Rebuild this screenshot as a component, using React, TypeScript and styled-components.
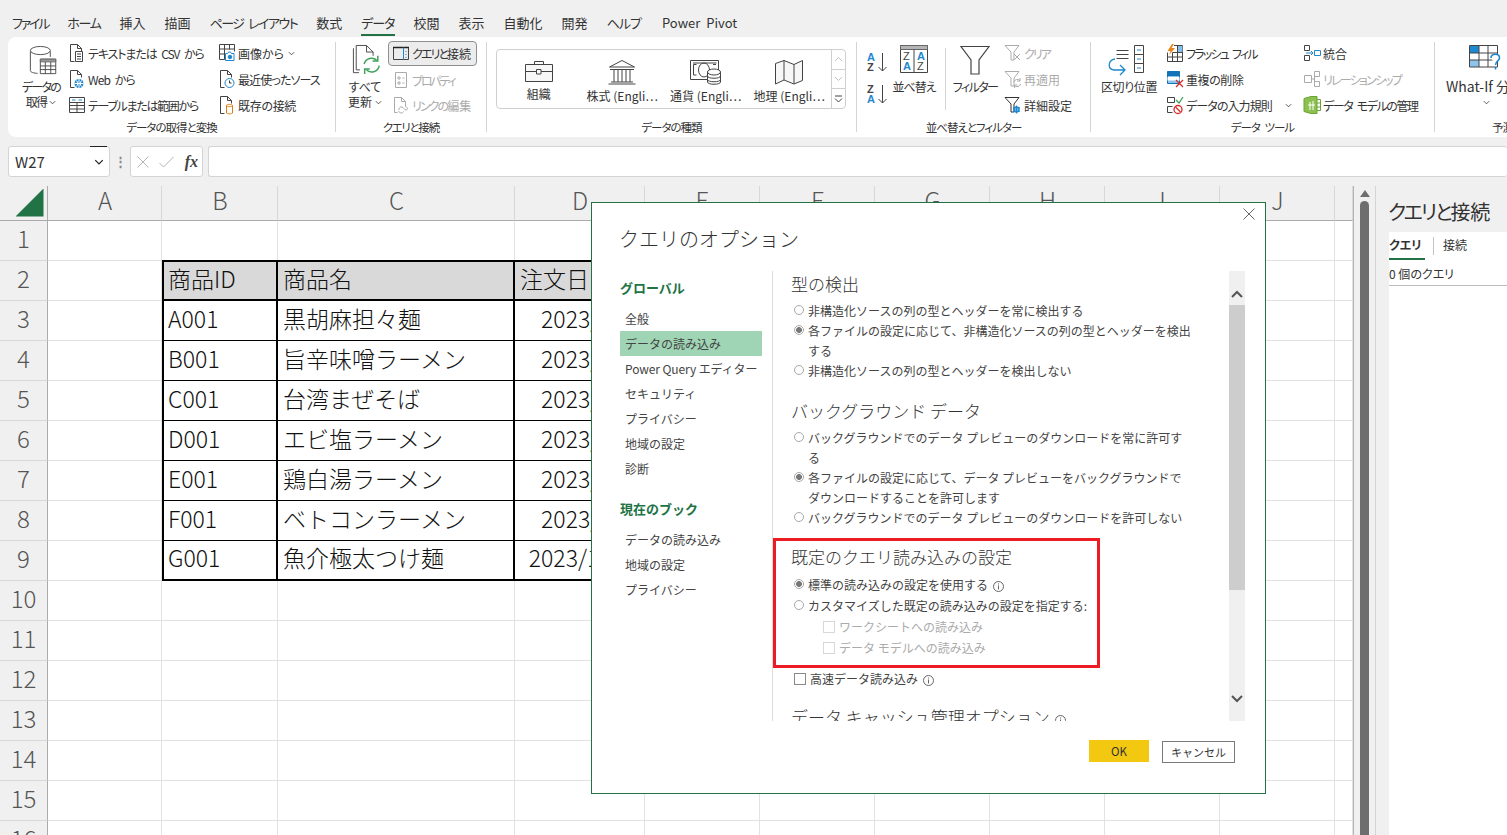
import React from "react";
import styled, { createGlobalStyle } from "styled-components";

const FONT = `"Noto Sans CJK JP", "Noto Sans", sans-serif`;
const GREEN = "#217346";
const BLUE = "#1e88d0";
const MUTED = "#ababab";

const GlobalStyle = createGlobalStyle`
  html, body {
    margin: 0;
    padding: 0;
    background: #f0f0f0;
    overflow: hidden;
  }
  body {
    font-family: ${FONT};
    font-feature-settings: "palt";
    color: #333;
  }
`;

const Page = styled.div`
  position: relative;
  width: 1507px;
  height: 835px;
  overflow: hidden;
  background: #f0f0f0;
  display: flex;
  flex-direction: column;
`;

/* ---- tabs ---- */

const TabBar = styled.div`
  height: 37px;
  flex: none;
  display: flex;
  gap: 19px;
  padding: 13px 0 0 12px;
  box-sizing: border-box;
`;

const Tab = styled.div<{ $active?: boolean; $track?: number; $gap?: number }>`
  height: 21px;
  line-height: 20px;
  font-size: 13px;
  white-space: nowrap;
  color: #333;
  letter-spacing: ${(p) => p.$track ?? 0}px;
  word-spacing: 3px;
  margin-left: ${(p) => p.$gap ?? 0}px;
  border-bottom: 2px solid ${(p) => (p.$active ? GREEN : "transparent")};
`;

/* narrow kana run next to full width kanji */
const Kana = styled.span<{ $track: number }>`
  letter-spacing: ${(p) => p.$track}px;
`;

/* ---- ribbon ---- */

const Ribbon = styled.div`
  flex: none;
  height: 100px;
  margin-left: 8px;
  background: #fff;
  border-radius: 8px 0 0 8px;
  display: flex;
  overflow: hidden;
`;

const Group = styled.section<{ $w: number; $last?: boolean }>`
  flex: none;
  width: ${(p) => p.$w}px;
  height: 90px;
  margin-top: 5px;
  box-sizing: border-box;
  border-right: ${(p) => (p.$last ? "none" : "1px solid #d4d4d4")};
  display: flex;
  flex-direction: column;
`;

const GroupBody = styled.div<{ $pad: number }>`
  flex: none;
  height: 76px;
  display: flex;
  padding-left: ${(p) => p.$pad}px;
  box-sizing: border-box;
`;

const GroupLabel = styled.div<{ $shift?: number }>`
  height: 14px;
  flex: none;
  text-align: center;
  font-size: 11.5px;
  line-height: 18px;
  letter-spacing: -1px;
  word-spacing: 3px;
  color: #333;
  white-space: nowrap;
  padding-left: ${(p) => p.$shift ?? 0}px;
`;

const BigButton = styled.div<{ $w: number; $indent?: number }>`
  flex: none;
  width: ${(p) => p.$w}px;
  margin-left: ${(p) => p.$indent ?? 0}px;
  display: flex;
  flex-direction: column;
  align-items: center;
  padding-top: 3px;
  font-size: 12px;
  line-height: 15px;
  text-align: center;
  white-space: nowrap;
`;

const BigIcon = styled.div<{ $shift?: number }>`
  height: 34px;
  display: flex;
  align-items: flex-start;
  margin-left: ${(p) => p.$shift ?? 0}px;
`;

const BigLabel = styled.div<{ $track?: number; $size?: number }>`
  letter-spacing: ${(p) => p.$track ?? 0}px;
  font-size: ${(p) => p.$size ?? 12}px;

  svg {
    display: inline-block;
    vertical-align: 1px;
    margin-left: 3px;
  }
`;

const SmallColumn = styled.div<{ $w: number; $indent?: number }>`
  flex: none;
  width: ${(p) => p.$w}px;
  margin-top: -2px;
  margin-left: ${(p) => p.$indent ?? 0}px;
  display: flex;
  flex-direction: column;
`;

const SmallButton = styled.div<{ $muted?: boolean; $active?: boolean; $track?: number }>`
  height: 26px;
  display: flex;
  align-items: center;
  gap: 2px;
  font-size: 12px;
  white-space: pre;
  letter-spacing: ${(p) => p.$track ?? 0}px;
  word-spacing: 3px;
  color: ${(p) => (p.$muted ? MUTED : "#333")};
  ${(p) =>
    p.$active &&
    `
    height: 24px;
    margin: 1px 0 1px -4px;
    padding-left: 3px;
    background: #ececec;
    border: 1px solid #8f8f8f;
    border-radius: 4px;
  `}
`;

const SmallChevron = styled.span<{ $gap: number }>`
  margin-left: ${(p) => p.$gap}px;
`;

const SortColumn = styled.div`
  flex: none;
  width: 24px;
  padding-top: 9px;
  display: flex;
  flex-direction: column;
  gap: 8px;
`;

const Rule = styled.div`
  flex: none;
  width: 1px;
  height: 62px;
  margin: 6px 7px 0 8px;
  background: #d4d4d4;
`;

const Gallery = styled.div`
  flex: none;
  width: 350px;
  height: 60px;
  margin-top: 7px;
  box-sizing: border-box;
  border: 1px solid #cfcfcf;
  border-radius: 4px;
  display: flex;
`;

const GalleryItem = styled.div`
  flex: none;
  width: 83.5px;
  display: flex;
  flex-direction: column;
  align-items: center;
  padding-top: 9px;
  font-size: 12px;
  white-space: nowrap;
  color: #333;
`;

const GalleryText = styled.div`
  margin-top: 3px;
  line-height: 16px;
`;

const GalleryScroll = styled.div`
  margin-left: auto;
  width: 14px;
  display: flex;
  flex-direction: column;
  border-left: 1px solid #cfcfcf;
`;

const GalleryStep = styled.div`
  flex: 1;
  display: flex;
  align-items: center;
  justify-content: center;
  & + & {
    border-top: 1px solid #cfcfcf;
  }
`;

/* ---- formula bar ---- */

const FormulaBar = styled.div`
  flex: none;
  height: 31px;
  margin-top: 9px;
  padding-left: 8px;
  display: flex;
  align-items: stretch;
`;

const Field = styled.div`
  box-sizing: border-box;
  background: #fff;
  border: 1px solid #d4d4d4;
  border-radius: 3px;
  display: flex;
  align-items: center;
`;

const NameBox = styled(Field)`
  width: 102px;
  padding: 0 2px 0 6px;
  justify-content: space-between;
  font-size: 15px;
  color: #333;
`;

const NameArrow = styled.div`
  align-self: stretch;
  width: 17px;
  box-sizing: border-box;
  margin-top: -1px;
  border-top: 1px solid #222;
  display: flex;
  align-items: center;
  justify-content: center;
`;

const Dots = styled.div`
  width: 20px;
  text-align: center;
  line-height: 29px;
  font-size: 13px;
  font-weight: 700;
  color: #888;
`;

const FormulaTools = styled(Field)`
  width: 73px;
  padding: 0 4px 0 6px;
  justify-content: space-between;
`;

const Fx = styled.span`
  font-family: "Liberation Serif", serif;
  font-style: italic;
  font-weight: 700;
  font-size: 16px;
  color: #444;
`;

const FormulaInput = styled(Field)`
  flex: 1;
  margin-left: 5px;
  border-right: none;
`;

/* ---- sheet ---- */

const Main = styled.div`
  flex: 1;
  margin-top: 9px;
  display: flex;
  min-height: 0;
`;

const Sheet = styled.div`
  flex: none;
  width: 1353px;
  height: 649px;
  overflow: hidden;
  display: grid;
  grid-template-columns: 48px 114px 116px 237px 130px repeat(6, 115px) 18px;
  grid-auto-rows: 40px;
  grid-template-rows: 35px;
  background: #fff;
  font-size: 24px;
  line-height: 1;
  font-feature-settings: normal;
`;

const HeadCell = styled.div<{ $row?: boolean }>`
  box-sizing: border-box;
  background: #f0f0f0;
  color: #555;
  font-weight: 300;
  display: flex;
  align-items: center;
  justify-content: center;
  padding: ${(p) => (p.$row ? "0 0 5px" : "0 0 6px 1px")};
  border-right: 1px solid ${(p) => (p.$row ? "#ababab" : "#d8d8d8")};
  border-bottom: 1px solid ${(p) => (p.$row ? "#d8d8d8" : "#ababab")};
`;

const Corner = styled(HeadCell)`
  padding: 0 0 1px;
  border-right: 1px solid #ababab;
`;

const CornerMark = styled.div`
  width: 28px;
  height: 28px;
  margin-left: 12px;
  background: ${GREEN};
  clip-path: polygon(100% 0, 100% 100%, 0 100%);
`;

const Cell = styled.div`
  box-sizing: border-box;
  border-right: 1px solid #e2e2e2;
  border-bottom: 1px solid #e2e2e2;
`;

const TableCell = styled.div<{ $head?: boolean; $lead?: boolean; $end?: boolean; $date?: boolean }>`
  box-sizing: border-box;
  display: flex;
  align-items: center;
  justify-content: ${(p) => (p.$date ? "flex-end" : "flex-start")};
  white-space: nowrap;
  overflow: hidden;
  margin-top: ${(p) => (p.$head ? -1 : 0)}px;
  padding: 0 ${(p) => (p.$date ? 10 : 4)}px 5px ${(p) => (p.$lead ? 4 : 5)}px;
  font-size: 23px;
  color: #111;
  font-weight: 300;
  background: ${(p) => (p.$head ? "#d9d9d9" : "#fff")};
  border-right: 2px solid #000;
  border-left: ${(p) => (p.$lead ? "2px solid #000" : "none")};
  border-top: ${(p) => (p.$head ? "2px solid #000" : "none")};
  border-bottom: ${(p) => (p.$head || p.$end ? 2 : 1)}px solid #000;
`;

const ScrollRail = styled.div`
  flex: none;
  width: 23px;
  box-sizing: border-box;
  border-left: 1px solid #b4b4b4;
  border-right: 1px solid #d4d4d4;
  display: flex;
  flex-direction: column;
  align-items: center;
  padding-top: 2px;
`;

const RailArrow = styled.div`
  width: 0;
  height: 0;
  border-left: 5px solid transparent;
  border-right: 5px solid transparent;
  border-bottom: 7px solid #6e6e6e;
  margin-top: 2px;
`;

const RailThumb = styled.div`
  flex: 1;
  width: 9px;
  margin-top: 4px;
  background: #6e6e6e;
  border-radius: 5px 5px 0 0;
`;

/* ---- side panel ---- */

const Panel = styled.aside`
  flex: 1;
  padding-left: 13px;
  display: flex;
  flex-direction: column;
`;

const PanelTitle = styled.h2`
  margin: 0 0 0 -1px;
  height: 46px;
  line-height: 52px;
  font-size: 20px;
  font-weight: 400;
  white-space: nowrap;
  color: #333;
`;

const PanelBody = styled.div`
  flex: 1;
  background: #fff;
`;

const PanelTabs = styled.div`
  height: 28px;
  display: flex;
  align-items: center;
  font-size: 12px;
`;

const PanelTab = styled.div<{ $active?: boolean }>`
  height: 28px;
  min-width: ${(p) => (p.$active ? 36 : 0)}px;
  line-height: 26px;
  box-sizing: border-box;
  font-weight: ${(p) => (p.$active ? 700 : 400)};
  border-bottom: 2px solid ${(p) => (p.$active ? GREEN : "transparent")};
`;

const PanelDivider = styled.div`
  width: 1px;
  height: 18px;
  margin: 0 9px 0 8px;
  background: #c4c4c4;
`;

const PanelCount = styled.div`
  height: 26px;
  line-height: 28px;
  font-size: 12px;
  box-sizing: border-box;
  border-bottom: 1px solid #bdbdbd;
  white-space: nowrap;
`;

/* ---- dialog ---- */

const Dialog = styled.div`
  position: absolute;
  left: 591px;
  top: 202px;
  width: 675px;
  height: 592px;
  box-sizing: border-box;
  background: #fff;
  border: 1px solid ${GREEN};
  display: flex;
  flex-direction: column;
  font-feature-settings: normal;
`;

const DialogHead = styled.div`
  height: 68px;
  flex: none;
  padding: 0 10px 0 28px;
  display: flex;
  justify-content: space-between;
  align-items: flex-start;
`;

const DialogTitle = styled.h1`
  margin: 20px 0 0 -1px;
  font-size: 20px;
  line-height: 32px;
  font-weight: 300;
  color: #333;
`;

const CloseButton = styled.div`
  margin-top: 5px;
`;

const DialogBody = styled.div`
  height: 450px;
  flex: none;
  margin-left: 28px;
  display: flex;
`;

const Nav = styled.nav`
  flex: none;
  width: 153px;
  box-sizing: border-box;
  padding-right: 10px;
  border-right: 1px solid #dcdcdc;
`;

const NavHeading = styled.div<{ $gap?: number }>`
  height: 20px;
  margin: ${(p) => p.$gap ?? 7}px 0 8px;
  line-height: 20px;
  font-size: 13px;
  font-weight: 700;
  color: ${GREEN};
`;

const NavItem = styled.div<{ $active?: boolean; $track?: number }>`
  height: 25px;
  line-height: 25px;
  padding-left: 5px;
  font-size: 12px;
  white-space: nowrap;
  color: #444;
  letter-spacing: ${(p) => p.$track ?? 0}px;
  background: ${(p) => (p.$active ? "#9fd5b5" : "transparent")};
`;

const Content = styled.div`
  flex: none;
  width: 456px;
  box-sizing: border-box;
  padding-left: 19px;
  overflow: hidden;
`;

const Heading = styled.h3<{ $gap?: number }>`
  margin: ${(p) => p.$gap ?? 0}px 0 4px -1px;
  height: 26px;
  line-height: 25px;
  font-size: 17px;
  font-weight: 300;
  white-space: nowrap;
  color: #333;
`;

const Option = styled.label<{ $h?: number; $indent?: boolean; $muted?: boolean }>`
  display: flex;
  align-items: flex-start;
  gap: 4px;
  font-size: 12px;
  line-height: ${(p) => p.$h ?? 20}px;
  white-space: nowrap;
  color: ${(p) => (p.$muted ? MUTED : "#444")};
  padding-left: ${(p) => (p.$indent ? 31 : 2)}px;
`;

const Radio = styled.span<{ $on?: boolean; $h?: number }>`
  flex: none;
  width: 10px;
  height: 10px;
  margin-top: ${(p) => ((p.$h ?? 20) - 10) / 2 - 1}px;
  box-sizing: border-box;
  border: 1px solid #a8a8a8;
  border-radius: 50%;
  background: ${(p) => (p.$on ? "radial-gradient(circle, #777 0 2.6px, #fff 3.2px)" : "#fff")};
`;

const Check = styled.span<{ $h?: number; $muted?: boolean }>`
  flex: none;
  width: 12px;
  height: 12px;
  margin-top: ${(p) => ((p.$h ?? 20) - 12) / 2}px;
  box-sizing: border-box;
  border: 1px solid ${(p) => (p.$muted ? "#d8d8d8" : "#8a8a8a")};
`;

const OptionInfo = styled.span`
  display: inline-flex;
  vertical-align: -2px;
  margin-left: 5px;
`;

const Callout = styled.div`
  width: 327px;
  height: 130px;
  margin: 10px 0 1px -19px;
  padding: 3px 0 0 16px;
  box-sizing: border-box;
  border: 3px solid #ed1c24;
`;

const DialogScroll = styled.div`
  flex: none;
  width: 16px;
  background: #f0f0f0;
  display: flex;
  flex-direction: column;
  align-items: center;
`;

const ScrollCap = styled.div<{ $h: number; $end?: boolean }>`
  flex: none;
  height: ${(p) => p.$h}px;
  display: flex;
  align-items: ${(p) => (p.$end ? "flex-start" : "flex-end")};
  padding: ${(p) => (p.$end ? "0" : "0 0 7px")};
  box-sizing: border-box;
`;

const ScrollThumb = styled.div`
  flex: none;
  width: 100%;
  height: 285px;
  background: #cdcdcd;
`;

const ScrollSpace = styled.div`
  flex: 1;
`;

const DialogFoot = styled.div`
  display: flex;
  justify-content: flex-end;
  align-items: flex-start;
  gap: 13px;
  padding: 19px 30px 0 0;
`;

const OkButton = styled.div`
  width: 60px;
  height: 22px;
  line-height: 22px;
  text-align: center;
  font-size: 11.5px;
  background: #f2c811;
  color: #333;
`;

const CancelButton = styled.div`
  width: 73px;
  height: 22px;
  margin-top: 1px;
  line-height: 20px;
  box-sizing: border-box;
  text-align: center;
  font-size: 11px;
  border: 1px solid #7a7a7a;
  color: #333;
`;

/* ---- icons ---- */

const Svg = styled.svg<{ $tone?: string }>`
  flex: none;
  display: block;
  fill: none;
  stroke: ${(p) => p.$tone ?? "#444"};
  stroke-width: 1;
  overflow: visible;
`;

const Letter = styled.text<{ $fill: string; $thin?: boolean }>`
  font-family: "Liberation Sans", sans-serif;
  font-weight: ${(p) => (p.$thin ? 400 : 700)};
  font-size: 11px;
  letter-spacing: 0;
  stroke: none;
  fill: ${(p) => p.$fill};
`;

const Page18 = ({ tone }: { tone?: string }) => (
  <path stroke={tone} d="M2.500 18.500V1.500h7l4 4v3M9.500 1.500v4h4M2.500 18.500h4" />
);

const IconText = () => (
  <Svg $tone="#444" width="18" height="20" viewBox="0 0 18 20">
    <Page18 />
    <path d="M7.500 8.500h7v10h-7zM9 11h4M9 13.500h4M9 16h4" />
  </Svg>
);

const IconWeb = () => (
  <Svg width="18" height="20" viewBox="0 0 18 20">
    <Page18 />
    <circle cx="11" cy="14.500" r="4.500" fill={BLUE} stroke="none" />
    <path stroke="#fff" d="M6.500 14.500h9M11 10v9M8.500 11.500c1.500 2 1.500 4.500 0 6M13.500 11.500c-1.500 2-1.500 4.500 0 6" />
  </Svg>
);

const IconRange = () => (
  <Svg width="18" height="20" viewBox="0 0 18 20">
    <path d="M1.500 2.500h15v15h-15zM1.500 7.500h15M1.500 10.500h15M1.500 14h15M9 7.500v10" />
    <path stroke={BLUE} d="M4 5h3.500M10.500 5H14" />
  </Svg>
);

const IconImage = () => (
  <Svg width="18" height="20" viewBox="0 0 18 20">
    <path d="M1.500 1.500h15v7M1.500 1.500v15h5M1.500 6h15M1.500 11h5M6.500 1.500v15M11.500 1.500v5" />
    <path stroke={BLUE} fill="#fff" d="M7.500 10.500h2l1-1.500h2l1 1.500h2.500v7h-8.500z" />
    <circle cx="12" cy="14" r="1.800" stroke={BLUE} fill={BLUE} />
  </Svg>
);

const IconRecent = () => (
  <Svg width="18" height="20" viewBox="0 0 18 20">
    <Page18 />
    <circle cx="11.500" cy="14" r="4.500" stroke={BLUE} fill="#fff" />
    <path stroke="#333" d="M11.500 11.500V14h2" />
  </Svg>
);

const IconConn = () => (
  <Svg width="18" height="20" viewBox="0 0 18 20">
    <Page18 />
    <path stroke="#e07b12" fill="#fff" d="M8.500 10.500c0-1.500 6-1.500 6 0v7.500c0 1-6 1-6 0zM8.500 10.500c0 1.500 6 1.500 6 0" />
  </Svg>
);

const IconData = () => (
  <Svg width="29" height="31" viewBox="0 0 32 34">
    <path d="M1.500 7v21c0 2 4 3 8 3.200M23.500 7v6" />
    <ellipse cx="12.500" cy="6" rx="11" ry="4.500" />
    <path fill="#fff" d="M12.500 15.500h17v16h-17z" />
    <path stroke="#666" fill="#999" d="M12.500 15.500h17v3h-17z" />
    <path d="M12.500 23h17M12.500 27h17M18 18.500v13M24 18.500v13" />
  </Svg>
);

const IconRefresh = () => (
  <Svg width="30" height="30" viewBox="0 0 32 32">
    <path d="M1.500 3.500v26h6M4.500 26.500V.5h11l7 7v4M15.500.5v7h7M4.500 26.500h4" />
    <path stroke="#3fa35b" strokeWidth="1.600" d="M13 20.500a8 8 0 0 1 13.500-4M29 22a8 8 0 0 1-14 4" />
    <path stroke="#3fa35b" strokeWidth="1.600" d="M27.500 11.500v5.500h-5.500M13.500 31v-5.500H19" />
  </Svg>
);

const IconPane = () => (
  <Svg width="18" height="16" viewBox="0 0 18 16">
    <path d="M1.500 1.500h15v12h-15z" />
    <path stroke="#222" strokeWidth="1.500" d="M1 1.500h16" />
    <path d="M11.500 1.500v12" stroke={BLUE} />
    <path stroke={BLUE} d="M14 5v1M14 8v1M14 11v1" />
  </Svg>
);

const IconProps = () => (
  <Svg $tone={MUTED} width="18" height="20" viewBox="0 0 18 20">
    <path d="M3.500 2.500h11v15h-11zM6 7h2v2H6zM6 12h2v2H6zM10.500 8h2M10.500 13h2" />
  </Svg>
);

const IconLink = () => (
  <Svg $tone={MUTED} width="18" height="20" viewBox="0 0 18 20">
    <path d="M2.500 17.500V2.500h7l4 4v5M9.500 2.500v4h4M2.500 17.500h3" />
    <path d="M7 15a2.500 2.500 0 0 1 3-3c2 .5 2 3 4 3 2.500 0 1.500-3.500-.5-3M6.500 16c1 2.500 4.500 2.500 5 .5" />
  </Svg>
);

const IconCase = () => (
  <Svg width="30" height="24" viewBox="0 0 30 24">
    <path fill="#f7f7f7" d="M1.500 5.500h27v17h-27z" />
    <path d="M10.500 5.500v-3h9v3M1.500 12.500h11M17 12.500h11.500M12.500 10.500h4.500v4.500h-4.500z" />
  </Svg>
);

const IconBank = () => (
  <Svg width="30" height="26" viewBox="0 0 30 26">
    <path d="M2.500 8 15 1.500 27.500 8zM3 10.500h24M4 23h22M1.500 25h27M7 10.500V23M11 10.500V23M15 10.500V23M19 10.500V23M23 10.500V23" />
  </Svg>
);

const IconMoney = () => (
  <Svg width="32" height="26" viewBox="0 0 32 26">
    <path d="M.5 1.500h28v19H.5zM3 4h23.500" />
    <path d="M3.500 5.500h3M3.500 5.500V16h3M26 5.500h-3" />
    <ellipse cx="14" cy="11" rx="5.500" ry="7" />
    <path fill="#fff" d="M17.500 13v10c0 3 13 3 13 0V13z" />
    <ellipse cx="24" cy="13" rx="6.500" ry="3" fill="#fff" />
    <path d="M17.500 17c0 3 13 3 13 0M17.500 20.500c0 3 13 3 13 0" />
  </Svg>
);

const IconMap = () => (
  <Svg width="30" height="26" viewBox="0 0 30 26">
    <path fill="#f7f7f7" d="M1.500 4.500 10 1.500l10 4 8.500-4v20L20 25l-10-4-8.500 4z" />
    <path d="M10 1.500V21M20 5.500V25" />
  </Svg>
);

const IconSortUp = () => (
  <Svg width="22" height="24" viewBox="0 0 22 24">
    <Letter $fill={BLUE} x="0" y="10">A</Letter>
    <Letter $fill="#444" x="0" y="20">Z</Letter>
    <path d="M15.500 2v18M11.500 16l4 4 4-4" />
  </Svg>
);

const IconSortDown = () => (
  <Svg width="22" height="24" viewBox="0 0 22 24">
    <Letter $fill="#444" x="0" y="10">Z</Letter>
    <Letter $fill={BLUE} x="0" y="20">A</Letter>
    <path d="M15.500 2v18M11.500 16l4 4 4-4" />
  </Svg>
);

const IconSortBig = () => (
  <Svg width="28" height="29" viewBox="0 0 28 29">
    <path fill="#fff" d="M.5.500h27v27H.5z" />
    <path fill="#b5b5b5" stroke="#666" d="M.5.500h27v4H.5z" />
    <path d="M14 4.500v23" />
    <Letter $thin $fill="#444" x="3" y="15">Z</Letter>
    <Letter $fill={BLUE} x="3" y="25">A</Letter>
    <Letter $fill={BLUE} x="17" y="15">A</Letter>
    <Letter $thin $fill="#444" x="17" y="25">Z</Letter>
  </Svg>
);

const IconFunnel = () => (
  <Svg width="30" height="30" viewBox="0 0 30 30">
    <path strokeWidth="1.200" d="M1 1.500h28L19 15v14h-8V15z" />
  </Svg>
);

const SmallFunnel = ({ tone }: { tone: string }) => (
  <path stroke={tone} d="M1 2.500h14L10 9v8H7V9z" />
);

const IconClear = () => (
  <Svg $tone={MUTED} width="18" height="20" viewBox="0 0 18 20">
    <SmallFunnel tone={MUTED} />
    <path d="m10 11 6 6M16 11l-6 6" />
  </Svg>
);

const IconReapply = () => (
  <Svg $tone={MUTED} width="18" height="20" viewBox="0 0 18 20">
    <SmallFunnel tone={MUTED} />
    <path d="M10 13a3.500 3.500 0 0 1 6-1.500M16.500 15a3.500 3.500 0 0 1-6 1.500M16 9v3h-3M10.500 19v-3h3" />
  </Svg>
);

const IconAdvanced = () => (
  <Svg width="18" height="20" viewBox="0 0 18 20">
    <SmallFunnel tone="#333" />
    <circle cx="12.500" cy="14.500" r="2.500" stroke={BLUE} strokeWidth="1.500" />
    <path stroke={BLUE} d="M12.500 10.500v8M9 12.500l7 4M16 12.500l-7 4" />
  </Svg>
);

const IconSplit = () => (
  <Svg width="44" height="32" viewBox="0 0 44 32">
    <path d="M13.500 5.500h12M13.500 9.500h12M13.500 13.500h12M31.500.5h9v9h-9zM31.500 9.500h9v9h-9zM31.500 18.500h9v9h-9z" />
    <path stroke={BLUE} d="M34 5h4M34 14h4M34 23h4" />
    <path stroke={BLUE} strokeWidth="1.300" d="M12 14c-7 1-8 10-1 11h11M17 20l5 5-5 5" />
  </Svg>
);

const IconFlash = () => (
  <Svg width="18" height="20" viewBox="0 0 18 20">
    <path d="M1.500 9.500v9h15v-16H8M1.500 14h15M6.500 9.500v9M11.500 3v15.500M6.500 9.500h10" />
    <path fill="#86bfe8" stroke="none" d="M12 3h4.500v6H12z" />
    <path fill="#e8841a" stroke="none" d="M6 1 1.500 8h3L3 12l6-7H5.500L8 1z" />
  </Svg>
);

const IconDup = () => (
  <Svg width="18" height="20" viewBox="0 0 18 20">
    <path fill="#8cc4ec" stroke="#1473b8" d="M1.500 2.500h12v12h-12z" />
    <path fill="#1473b8" stroke="none" d="M1.500 2.500h12V7h-12z" />
    <path fill="#fff" stroke="none" d="M1.500 8h12v3.500h-12z" />
    <path stroke="#d92b2b" strokeWidth="1.300" d="m10 11 7 7M17 11l-7 7" />
  </Svg>
);

const IconValid = () => (
  <Svg width="18" height="20" viewBox="0 0 18 20">
    <path d="M1.500 2.500h7v5h-7zM1.500 11.500h5M1.500 11.500v6h5" />
    <path stroke="#3fa35b" strokeWidth="1.300" d="m10 5 3 3 4-6" />
    <circle cx="12" cy="14.500" r="4" stroke="#d92b2b" strokeWidth="1.300" />
    <path stroke="#d92b2b" strokeWidth="1.300" d="m9.500 12 5 5" />
  </Svg>
);

const IconMerge = () => (
  <Svg width="18" height="20" viewBox="0 0 18 20">
    <path d="M1.500 2.500h5v5h-5zM1.500 12.500h5v5h-5z" />
    <path stroke={BLUE} d="M3 10h7M8 8l2 2-2 2M11.500 7.500h6v5h-6z" />
  </Svg>
);

const IconRelation = () => (
  <Svg $tone={MUTED} width="18" height="20" viewBox="0 0 18 20">
    <path d="M1.500 6.500h7v7h-7zM11.500 2.500h5v5h-5zM11.500 12.500h5v5h-5zM8.500 10h3M11.500 5v10" />
  </Svg>
);

const IconModel = () => (
  <Svg $tone="#6aa531" width="18" height="20" viewBox="0 0 18 20">
    <path fill="#8cc152" d="M1 3.500 8 1.500h6v17H8l-7-2z" />
    <path stroke="#fff" d="M7 7v8M10 6v9M5 10h7" />
    <path d="M14 4.500h3.500v11H14M14 8h3.500M14 12h3.500" />
  </Svg>
);

const IconWhatIf = () => (
  <Svg width="32" height="28" viewBox="0 0 32 28">
    <path fill="#8cc4ec" stroke="none" d="M1 1h9v7H1zM1 15h9v7H1z" />
    <path fill="#1e88d0" stroke="none" d="M1 1h9v7H1z" />
    <path d="M.5.500h28v21.500H.5zM.5 8h28M.5 15h28M10 .5V22M19 .5V22" />
    <path stroke={BLUE} strokeWidth="1.600" fill="#fff" d="M22 13c0-5 9-5 8.500 0 0 3-4 3-4 7" />
    <path stroke={BLUE} strokeWidth="1.600" d="M26.500 22v2.500" />
  </Svg>
);

const Chevron = ({ tone = "#444", size = 8 }: { tone?: string; size?: number }) => (
  <Svg $tone={tone} width={size} height={size} viewBox="0 0 8 8">
    <path d="m1 2.500 3 3 3-3" />
  </Svg>
);

const CrossIcon = ({ size, tone }: { size: number; tone: string }) => (
  <Svg $tone={tone} width={size} height={size} viewBox="0 0 12 12">
    <path d="m.5.5 11 11M11.500.5l-11 11" />
  </Svg>
);

const CheckMark = () => (
  <Svg $tone="#b4b4b4" width="15" height="12" viewBox="0 0 15 12">
    <path d="m.5 7 4 4 10-10" />
  </Svg>
);

const BoldChevron = ({ up }: { up?: boolean }) => (
  <Svg $tone="#555" width="12" height="8" viewBox="0 0 12 8">
    <path strokeWidth="2" d={up ? "m1 7 5-5 5 5" : "m1 1 5 5 5-5"} />
  </Svg>
);

const InfoIcon = () => (
  <Svg $tone="#666" width="11" height="11" viewBox="0 0 11 11">
    <circle cx="5.500" cy="5.500" r="5" />
    <path d="M5.500 4.500v4M5.500 2.500v1" />
  </Svg>
);

const GalleryArrow = ({ up }: { up?: boolean }) => (
  <Svg $tone="#c4c4c4" width="9" height="6" viewBox="0 0 9 6">
    <path d={up ? "m1 5 3.500-3.500L8 5" : "m1 1 3.500 3.500L8 1"} />
  </Svg>
);

const GalleryMore = () => (
  <Svg $tone="#444" width="9" height="8" viewBox="0 0 9 8">
    <path d="M1 1h7M1 3.500l3.500 3.500L8 3.500" />
  </Svg>
);

/* ---- data ---- */

const tabs = [
  { label: "ファイル", track: -2.2 },
  { label: "ホーム", track: -1.3 },
  { label: "挿入" },
  { label: "描画" },
  { label: "ページ レイアウト", track: -1.5 },
  { label: "数式" },
  { label: "データ", track: -1, active: true },
  { label: "校閲" },
  { label: "表示" },
  { label: "自動化" },
  { label: "開発" },
  { label: "ヘルプ", track: -1 },
];

const columns = ["A", "B", "C", "D", "E", "F", "G", "H", "I", "J", ""];

const tableRows = [
  ["商品ID", "商品名", "注文日"],
  ["A001", "黒胡麻担々麺", "2023/1/1"],
  ["B001", "旨辛味噌ラーメン", "2023/1/2"],
  ["C001", "台湾まぜそば", "2023/1/3"],
  ["D001", "エビ塩ラーメン", "2023/1/4"],
  ["E001", "鶏白湯ラーメン", "2023/1/5"],
  ["F001", "ベトコンラーメン", "2023/1/6"],
  ["G001", "魚介極太つけ麺", "2023/1/10"],
];

const SheetGrid = () => {
  const cells: React.ReactNode[] = [];
  for (let row = 1; row <= 16; row++) {
    cells.push(<HeadCell $row key={`h${row}`}>{row}</HeadCell>);
    columns.forEach((_, col) => {
      const key = `${row}-${col}`;
      const data = tableRows[row - 2];
      if (data && col >= 1 && col <= 3) {
        const isHead = row === 2;
        cells.push(
          <TableCell
            key={key}
            $head={isHead}
            $lead={col === 1}
            $end={row === 9}
            $date={col === 3 && !isHead}
          >
            {data[col - 1]}
          </TableCell>,
        );
      } else {
        cells.push(<Cell key={key} />);
      }
    });
  }
  return (
    <Sheet>
      <Corner>
        <CornerMark />
      </Corner>
      {columns.map((c) => (
        <HeadCell key={c || "end"}>{c}</HeadCell>
      ))}
      {cells}
    </Sheet>
  );
};

const RibbonBar = () => (
  <Ribbon>
    <Group $w={328}>
      <GroupBody $pad={11}>
        <BigButton $w={44}>
          <BigIcon $shift={5}><IconData /></BigIcon>
          <BigLabel $track={-1.7}>
            データの
            <br />
            取得<Chevron size={7} />
          </BigLabel>
        </BigButton>
        <SmallColumn $w={150} $indent={5}>
          <SmallButton $track={-1.1}><IconText />テキストまたは CSV から</SmallButton>
          <SmallButton $track={-0.9}><IconWeb />Web から</SmallButton>
          <SmallButton $track={-1.3}><IconRange />テーブルまたは範囲から</SmallButton>
        </SmallColumn>
        <SmallColumn $w={110}>
          <SmallButton>
            <IconImage />画像から<SmallChevron $gap={2}><Chevron size={7} /></SmallChevron>
          </SmallButton>
          <SmallButton $track={-0.9}><IconRecent />最近使ったソース</SmallButton>
          <SmallButton $track={-0.3}><IconConn />既存の接続</SmallButton>
        </SmallColumn>
      </GroupBody>
      <GroupLabel>データの取得と変換</GroupLabel>
    </Group>

    <Group $w={151}>
      <GroupBody $pad={10}>
        <BigButton $w={38}>
          <BigIcon $shift={3}><IconRefresh /></BigIcon>
          <BigLabel>
            すべて
            <br />
            更新<Chevron size={7} />
          </BigLabel>
        </BigButton>
        <SmallColumn $w={85} $indent={8}>
          <SmallButton $active><IconPane /><span><Kana $track={-1.9}>クエリと</Kana>接続</span></SmallButton>
          <SmallButton $muted $track={-2.2}><IconProps />プロパティ</SmallButton>
          <SmallButton $muted><IconLink /><span><Kana $track={-1.9}>リンクの</Kana>編集</span></SmallButton>
        </SmallColumn>
      </GroupBody>
      <GroupLabel><Kana $track={-1.4}>クエリと</Kana>接続</GroupLabel>
    </Group>

    <Group $w={370}>
      <GroupBody $pad={9}>
        <Gallery>
          <GalleryItem><IconCase /><GalleryText>組織</GalleryText></GalleryItem>
          <GalleryItem><IconBank /><GalleryText>株式 (Engli⋯</GalleryText></GalleryItem>
          <GalleryItem><IconMoney /><GalleryText>通貨 (Engli⋯</GalleryText></GalleryItem>
          <GalleryItem><IconMap /><GalleryText>地理 (Engli⋯</GalleryText></GalleryItem>
          <GalleryScroll>
            <GalleryStep><GalleryArrow up /></GalleryStep>
            <GalleryStep><GalleryArrow /></GalleryStep>
            <GalleryStep><GalleryMore /></GalleryStep>
          </GalleryScroll>
        </Gallery>
      </GroupBody>
      <GroupLabel>データの種類</GroupLabel>
    </Group>

    <Group $w={234}>
      <GroupBody $pad={10}>
        <SortColumn>
          <IconSortUp />
          <IconSortDown />
        </SortColumn>
        <BigButton $w={46}>
          <BigIcon><IconSortBig /></BigIcon>
          <BigLabel $track={-1}>並べ替え</BigLabel>
        </BigButton>
        <Rule />
        <BigButton $w={44}>
          <BigIcon><IconFunnel /></BigIcon>
          <BigLabel $track={-1.6}>フィルター</BigLabel>
        </BigButton>
        <SmallColumn $w={80} $indent={7}>
          <SmallButton $muted $track={-2}><IconClear />クリア</SmallButton>
          <SmallButton $muted><IconReapply />再適用</SmallButton>
          <SmallButton><IconAdvanced />詳細設定</SmallButton>
        </SmallColumn>
      </GroupBody>
      <GroupLabel>並べ替えとフィルター</GroupLabel>
    </Group>

    <Group $w={344}>
      <GroupBody $pad={10}>
        <BigButton $w={56}>
          <BigIcon $shift={-8}><IconSplit /></BigIcon>
          <BigLabel $track={-0.4}>区切り位置</BigLabel>
        </BigButton>
        <SmallColumn $w={137} $indent={9}>
          <SmallButton $track={-1.8}><IconFlash />フラッシュ フィル</SmallButton>
          <SmallButton $track={-0.4}><IconDup />重複の削除</SmallButton>
          <SmallButton $track={-0.9}>
            <IconValid />データの入力規則
            <SmallChevron $gap={11}><Chevron size={7} /></SmallChevron>
          </SmallButton>
        </SmallColumn>
        <SmallColumn $w={120}>
          <SmallButton><IconMerge />統合</SmallButton>
          <SmallButton $muted $track={-1.8}><IconRelation />リレーションシップ</SmallButton>
          <SmallButton $track={-1.4}><IconModel />データ モデルの管理</SmallButton>
        </SmallColumn>
      </GroupBody>
      <GroupLabel>データ ツール</GroupLabel>
    </Group>

    <Group $w={100} $last>
      <GroupBody $pad={10}>
        <BigButton $w={80}>
          <BigIcon><IconWhatIf /></BigIcon>
          <BigLabel $size={14}>
            What-If 分析
            <br />
            <Chevron size={7} />
          </BigLabel>
        </BigButton>
      </GroupBody>
      <GroupLabel $shift={35}>予測</GroupLabel>
    </Group>
  </Ribbon>
);

const QueryDialog = () => (
  <Dialog>
    <DialogHead>
      <DialogTitle>クエリのオプション</DialogTitle>
      <CloseButton><CrossIcon size={12} tone="#666" /></CloseButton>
    </DialogHead>
    <DialogBody>
      <Nav>
        <NavHeading>グローバル</NavHeading>
        <NavItem>全般</NavItem>
        <NavItem $active>データの読み込み</NavItem>
        <NavItem $track={-0.1}>Power Query エディター</NavItem>
        <NavItem>セキュリティ</NavItem>
        <NavItem>プライバシー</NavItem>
        <NavItem>地域の設定</NavItem>
        <NavItem>診断</NavItem>
        <NavHeading $gap={18}>現在のブック</NavHeading>
        <NavItem>データの読み込み</NavItem>
        <NavItem>地域の設定</NavItem>
        <NavItem>プライバシー</NavItem>
      </Nav>
      <Content>
        <Heading>型の検出</Heading>
        <Option><Radio />非構造化ソースの列の型とヘッダーを常に検出する</Option>
        <Option>
          <Radio $on />
          <span>各ファイルの設定に応じて、非構造化ソースの列の型とヘッダーを検出<br />する</span>
        </Option>
        <Option><Radio />非構造化ソースの列の型とヘッダーを検出しない</Option>

        <Heading $gap={17}>バックグラウンド データ</Heading>
        <Option>
          <Radio />
          <span>バックグラウンドでのデータ プレビューのダウンロードを常に許可す<br />る</span>
        </Option>
        <Option>
          <Radio $on />
          <span>各ファイルの設定に応じて、データ プレビューをバックグラウンドで<br />ダウンロードすることを許可します</span>
        </Option>
        <Option><Radio />バックグラウンドでのデータ プレビューのダウンロードを許可しない</Option>

        <Callout>
          <Heading>既定のクエリ読み込みの設定</Heading>
          <Option $h={21}>
            <Radio $on $h={21} />
            <span>標準の読み込みの設定を使用する<OptionInfo><InfoIcon /></OptionInfo></span>
          </Option>
          <Option $h={21}><Radio $h={21} />カスタマイズした既定の読み込みの設定を指定する:</Option>
          <Option $h={21} $indent $muted><Check $h={21} $muted />ワークシートへの読み込み</Option>
          <Option $h={21} $indent $muted><Check $h={21} $muted />データ モデルへの読み込み</Option>
        </Callout>

        <Option>
          <Check />
          <span>高速データ読み込み<OptionInfo><InfoIcon /></OptionInfo></span>
        </Option>
        <Heading $gap={15}>
          データ キャッシュ管理オプション<OptionInfo><InfoIcon /></OptionInfo>
        </Heading>
      </Content>
      <DialogScroll>
        <ScrollCap $h={34}><BoldChevron up /></ScrollCap>
        <ScrollThumb />
        <ScrollSpace />
        <ScrollCap $h={26} $end><BoldChevron /></ScrollCap>
      </DialogScroll>
    </DialogBody>
    <DialogFoot>
      <OkButton>OK</OkButton>
      <CancelButton>キャンセル</CancelButton>
    </DialogFoot>
  </Dialog>
);

export default function App() {
  return (
    <>
      <GlobalStyle />
      <Page>
        <TabBar>
          {tabs.map((t) => (
            <Tab key={t.label} $active={t.active} $track={t.track}>{t.label}</Tab>
          ))}
          <Tab $gap={2}>Power Pivot</Tab>
        </TabBar>
        <RibbonBar />
        <FormulaBar>
          <NameBox>
            W27
            <NameArrow><Chevron tone="#222" size={10} /></NameArrow>
          </NameBox>
          <Dots>⋮</Dots>
          <FormulaTools>
            <CrossIcon size={12} tone="#b4b4b4" />
            <CheckMark />
            <Fx>fx</Fx>
          </FormulaTools>
          <FormulaInput />
        </FormulaBar>
        <Main>
          <SheetGrid />
          <ScrollRail>
            <RailArrow />
            <RailThumb />
          </ScrollRail>
          <Panel>
            <PanelTitle><Kana $track={-2.2}>クエリと</Kana>接続</PanelTitle>
            <PanelBody>
              <PanelTabs>
                <PanelTab $active>クエリ</PanelTab>
                <PanelDivider />
                <PanelTab>接続</PanelTab>
              </PanelTabs>
              <PanelCount>0 個のクエリ</PanelCount>
            </PanelBody>
          </Panel>
        </Main>
        <QueryDialog />
      </Page>
    </>
  );
}
